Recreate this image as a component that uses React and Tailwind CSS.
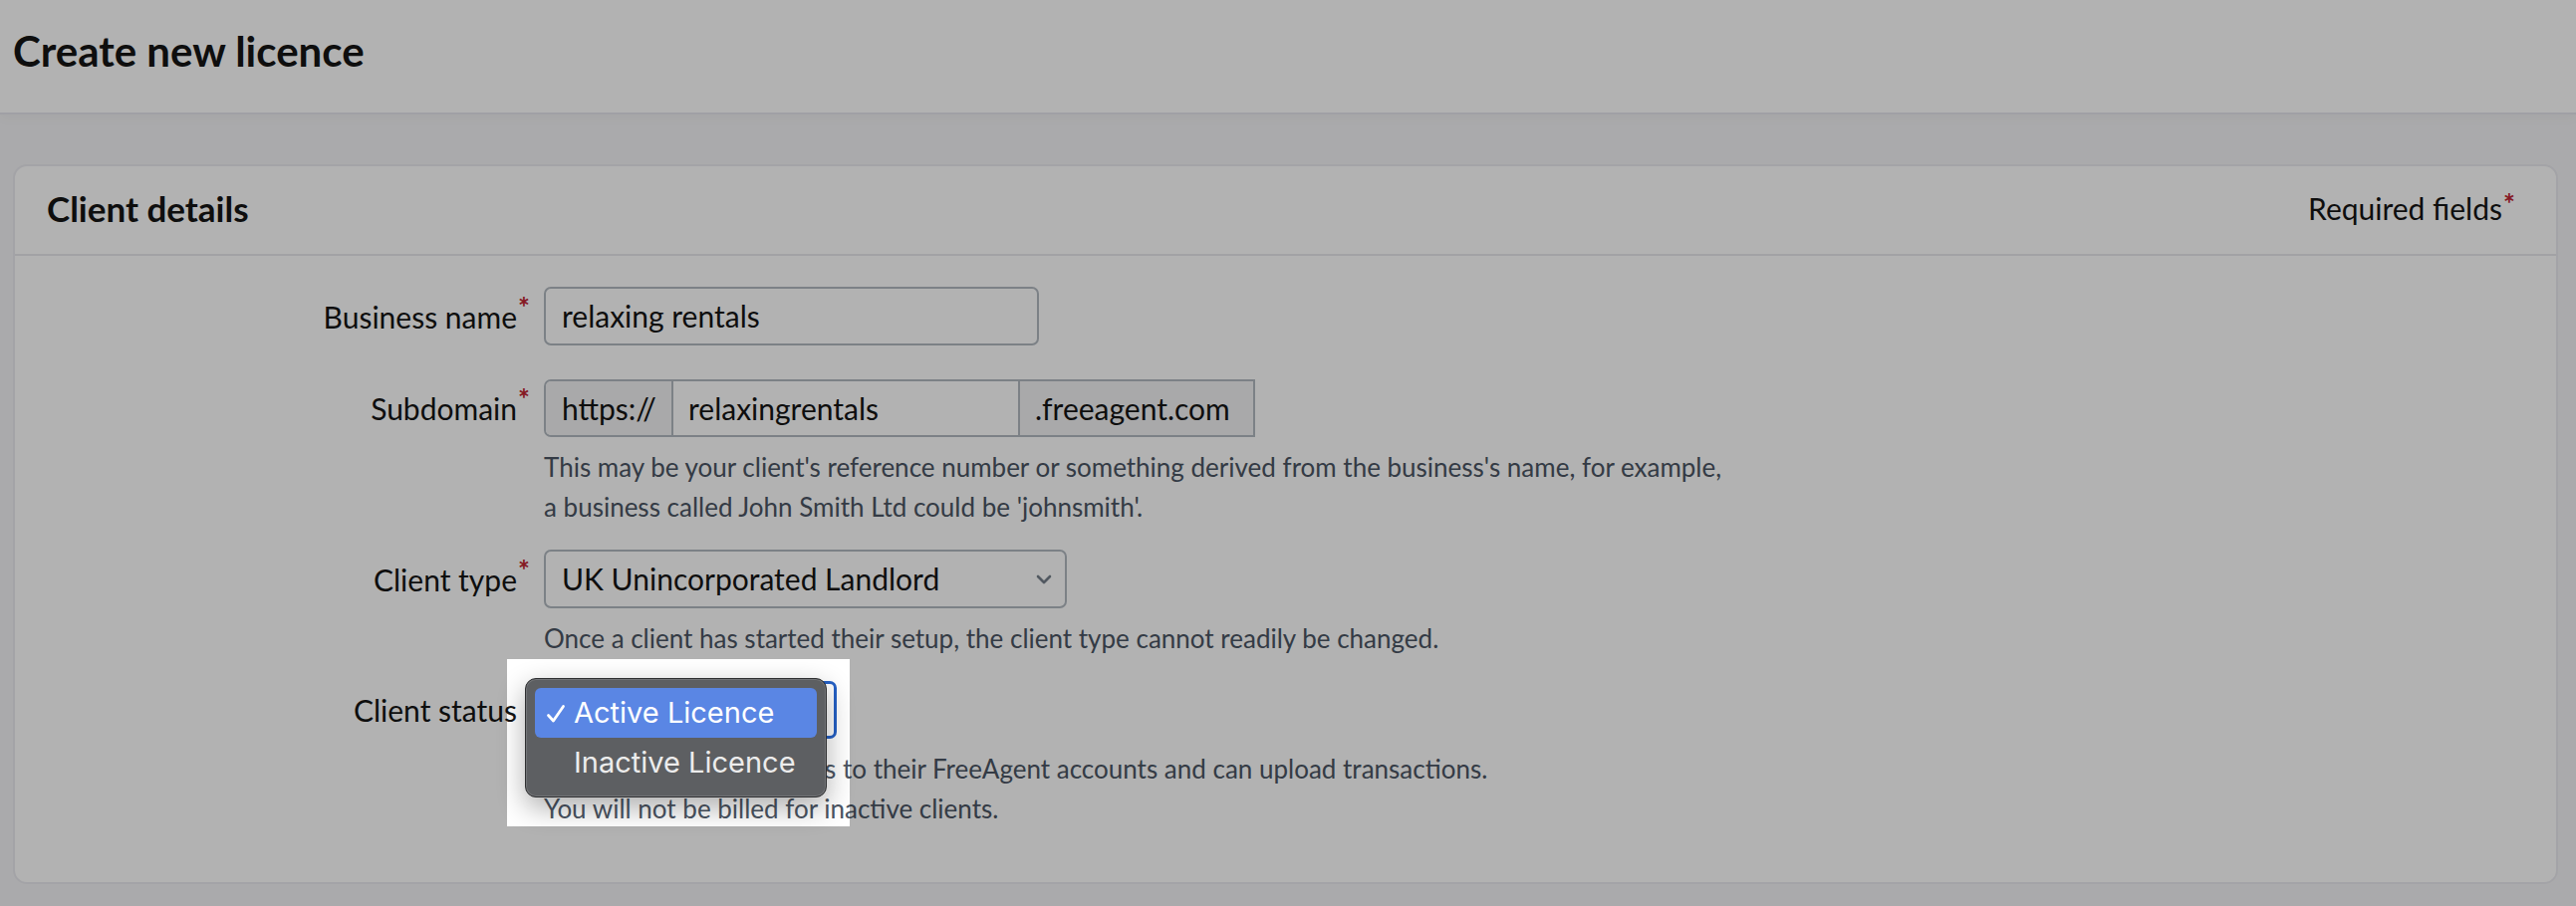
import React from "react";

function Asterisk({ className = "" }) {
  return (
    <span className={`absolute left-full ml-[1px] text-[#bf2430] text-[28px] leading-none font-bold ${className}`}>
      *
    </span>
  );
}

function Row({ label, required, children, className = "", labelHeight = "h-[59px]" }) {
  return (
    <div className={`flex ${className}`}>
      <div className={`w-[504px] shrink-0 flex items-center justify-end ${labelHeight}`}>
        <span className="relative text-[30px] leading-[36px]">
          {label}
          {required && <Asterisk className="top-[-6px]" />}
        </span>
      </div>
      <div className="ml-[27px]">{children}</div>
    </div>
  );
}

function Help({ children }) {
  return <p className="mt-[10px] text-[26px] leading-[40px] text-[#4b5563]">{children}</p>;
}

function Chevron() {
  return (
    <svg width="18" height="12" viewBox="0 0 18 12" fill="none" className="shrink-0">
      <path d="M3 3l6 6 6-6" stroke="#76808b" strokeWidth="2.6" strokeLinecap="round" strokeLinejoin="round" />
    </svg>
  );
}

function Check() {
  return (
    <svg width="20" height="20" viewBox="0 0 20 20" fill="none">
      <path d="M2.5 11.5l5 5.5L17.5 2.5" stroke="white" strokeWidth="2.8" strokeLinecap="round" strokeLinejoin="round" />
    </svg>
  );
}

function StatusMenu() {
  return (
    <div className="absolute left-[-19px] top-[-3px] w-[303px] h-[120px] z-20 rounded-[11px] bg-[#5d5f62] border border-[#2e2f31] p-[9px] font-['Inter',sans-serif] text-[29px] shadow-[inset_0_0_0_1px_rgba(255,255,255,0.14),0_10px_28px_rgba(0,0,0,0.32)]">
      <div className="h-[50px] rounded-[6px] bg-[#5a86e4] flex items-center text-white">
        <span className="w-[39px] pl-[11px] pt-[2px] flex items-center">
          <Check />
        </span>
        <span>Active Licence</span>
      </div>
      <div className="h-[50px] flex items-center pl-[39px] text-[#ececec]">Inactive Licence</div>
    </div>
  );
}

export default function App() {
  return (
    <div className="min-h-screen bg-[#f4f4f6] font-['Lato',sans-serif] text-[#151515]">
      <header className="h-[115px] bg-white border-b-2 border-[#e6e6ec] px-[13px] pt-[26px] shadow-[0_4px_12px_rgba(0,0,0,0.03)]">
        <h1 className="text-[42px] leading-[50px] font-bold">Create new licence</h1>
      </header>

      <main className="pt-[50px] pl-[13px] pr-[18px]">
        <section className="bg-white border-2 border-[#eaeaef] rounded-[14px]">
          <div className="h-[90px] border-b-2 border-[#e8e8ed] flex items-center justify-between pl-[32px] pr-[54px] pb-[3px]">
            <h2 className="text-[35px] font-bold">Client details</h2>
            <span className="relative text-[30px]">
              Required fields
              <Asterisk className="top-[3px]" />
            </span>
          </div>

          <div className="pt-[31px] pb-[54px]">
            <Row label="Business name" required className="mb-[34px]">
              <div className="w-[497px] h-[59px] border-2 border-[#b2b9c1] rounded-[7px] flex items-center px-[16px] text-[30px]">
                relaxing rentals
              </div>
            </Row>

            <Row label="Subdomain" required labelHeight="h-[58px]" className="mb-[23px]">
              <div className="flex h-[58px] w-[714px] border-2 border-[#b2b9c1] rounded-l-[7px] text-[30px]">
                <div className="w-[128px] bg-[#f2f3f4] rounded-l-[5px] border-r-2 border-[#b2b9c1] flex items-center px-[16px]">
                  https://
                </div>
                <div className="w-[346px] flex items-center px-[15px]">relaxingrentals</div>
                <div className="flex-1 bg-[#f2f3f4] border-l-2 border-[#b2b9c1] flex items-center px-[15px]">
                  .freeagent.com
                </div>
              </div>
              <Help>
                This may be your client's reference number or something derived from the business's name, for example,
                <br />
                a business called John Smith Ltd could be 'johnsmith'.
              </Help>
            </Row>

            <Row label="Client type" required className="mb-[23px]">
              <div className="w-[525px] h-[59px] border-2 border-[#b2b9c1] rounded-[7px] flex items-center justify-between pl-[16px] pr-[12px] text-[30px]">
                <span>UK Unincorporated Landlord</span>
                <Chevron />
              </div>
              <Help>Once a client has started their setup, the client type cannot readily be changed.</Help>
            </Row>

            <Row label="Client status" labelHeight="h-[58px]">
              <div className="relative w-[294px] h-[58px]">
                <div className="w-full h-full border-[3px] border-[#2561c6] rounded-[7px] flex items-center px-[16px] text-[30px]">
                  Active Licence
                </div>
                <div className="absolute left-[-37px] top-[-22px] w-[344px] h-[168px] z-10 pointer-events-none shadow-[0_0_0_4000px_rgba(0,0,0,0.3)]" />
                <StatusMenu />
              </div>
              <Help>
                Active clients have access to their FreeAgent accounts and can upload transactions.
                <br />
                You will not be billed for inactive clients.
              </Help>
            </Row>
          </div>
        </section>
      </main>
    </div>
  );
}
